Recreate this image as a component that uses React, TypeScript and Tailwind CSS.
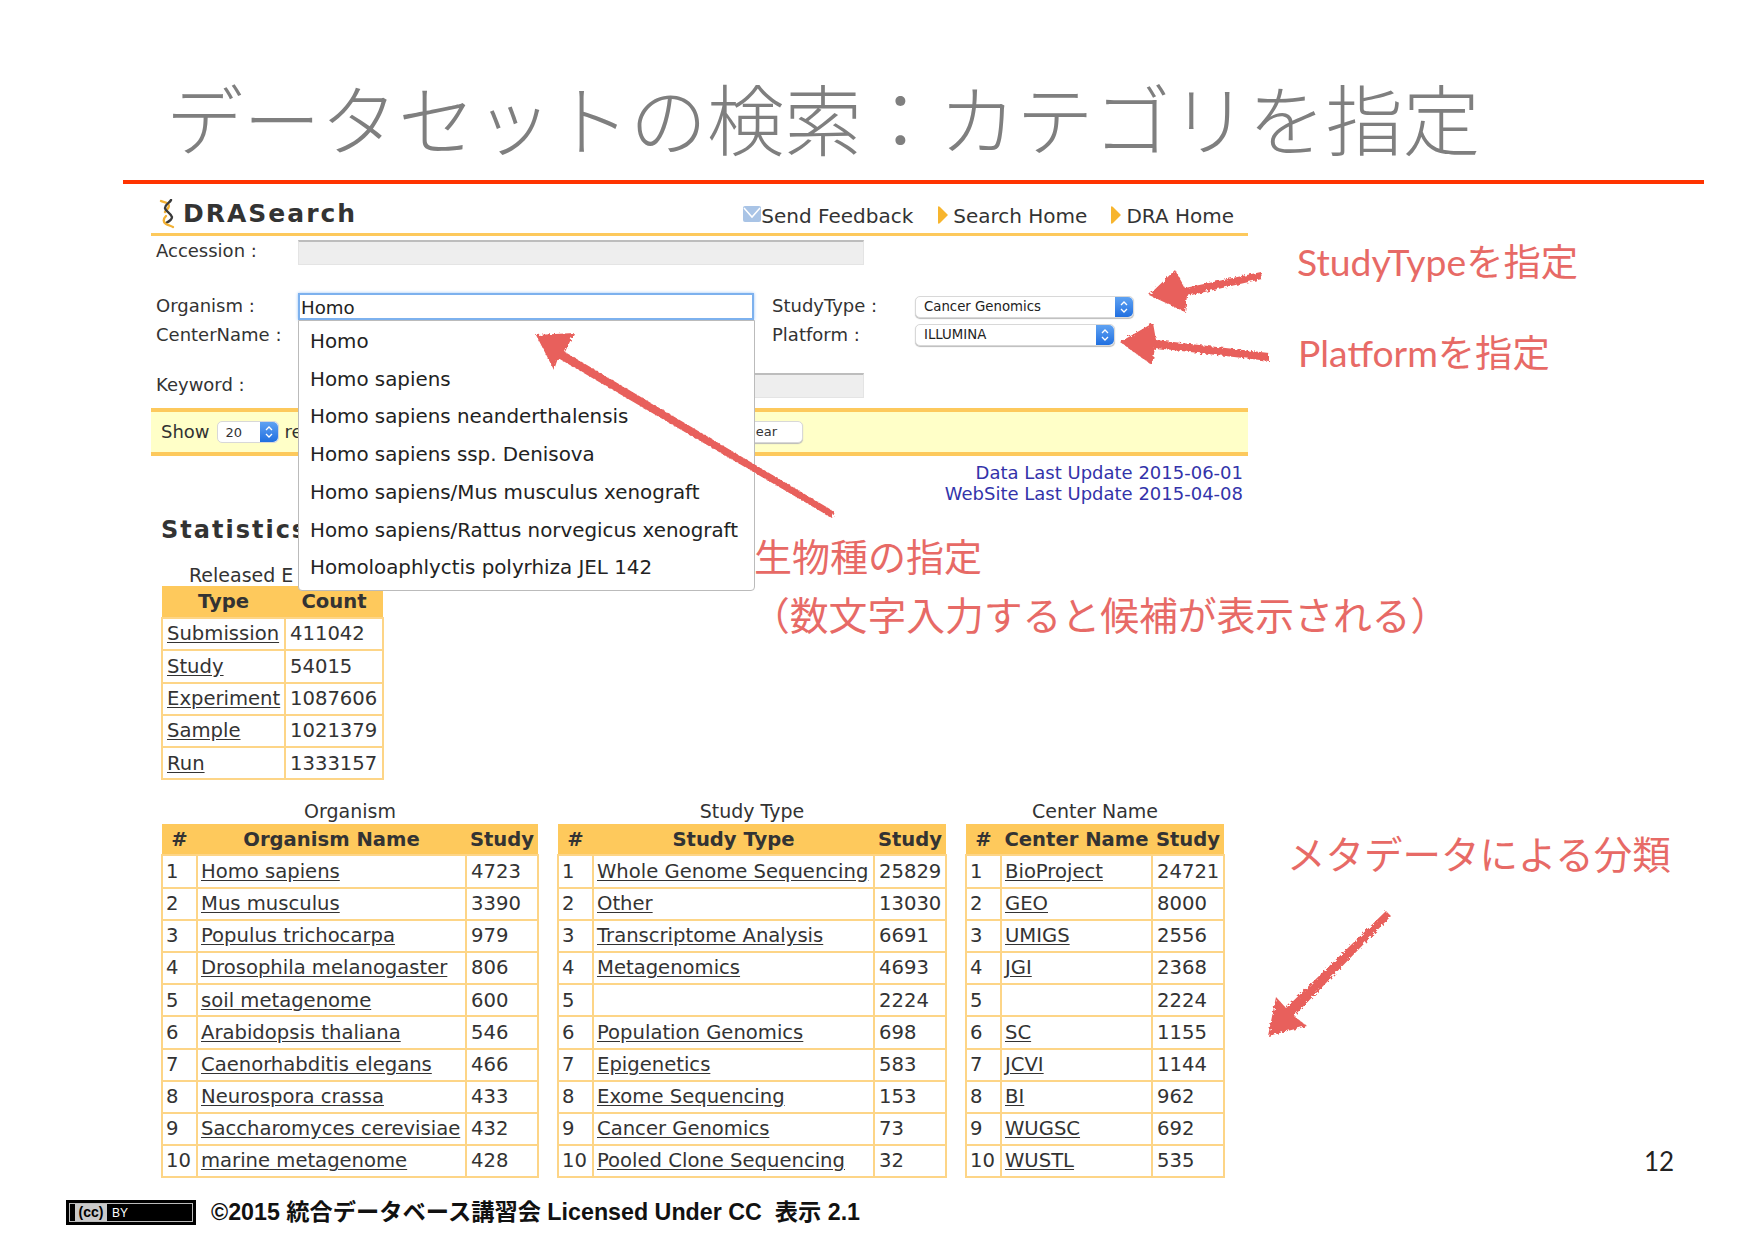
import React from "react";

const web = "font-['DejaVu_Sans','Noto_Sans_CJK_JP',sans-serif]";
const note =
  "absolute font-['Lato','Noto_Sans_CJK_JP',sans-serif] text-[#e76a66] whitespace-nowrap leading-none";

const suggestions = [
  "Homo",
  "Homo sapiens",
  "Homo sapiens neanderthalensis",
  "Homo sapiens ssp. Denisova",
  "Homo sapiens/Mus musculus xenograft",
  "Homo sapiens/Rattus norvegicus xenograft",
  "Homoloaphlyctis polyrhiza JEL 142",
];

const statistics = [
  ["Submission", "411042"],
  ["Study", "54015"],
  ["Experiment", "1087606"],
  ["Sample", "1021379"],
  ["Run", "1333157"],
];

const organisms = [
  ["Homo sapiens", "4723"],
  ["Mus musculus", "3390"],
  ["Populus trichocarpa", "979"],
  ["Drosophila melanogaster", "806"],
  ["soil metagenome", "600"],
  ["Arabidopsis thaliana", "546"],
  ["Caenorhabditis elegans", "466"],
  ["Neurospora crassa", "433"],
  ["Saccharomyces cerevisiae", "432"],
  ["marine metagenome", "428"],
];

const studyTypes = [
  ["Whole Genome Sequencing", "25829"],
  ["Other", "13030"],
  ["Transcriptome Analysis", "6691"],
  ["Metagenomics", "4693"],
  ["", "2224"],
  ["Population Genomics", "698"],
  ["Epigenetics", "583"],
  ["Exome Sequencing", "153"],
  ["Cancer Genomics", "73"],
  ["Pooled Clone Sequencing", "32"],
];

const centers = [
  ["BioProject", "24721"],
  ["GEO", "8000"],
  ["UMIGS", "2556"],
  ["JGI", "2368"],
  ["", "2224"],
  ["SC", "1155"],
  ["JCVI", "1144"],
  ["BI", "962"],
  ["WUGSC", "692"],
  ["WUSTL", "535"],
];

function Stepper() {
  return (
    <span className="w-[18px] self-stretch rounded-r-[5px] bg-gradient-to-b from-[#5fa2f2] to-[#1f6fe0] flex items-center justify-center shrink-0">
      <svg width="8" height="14" viewBox="0 0 8 14" fill="none" stroke="#fff" strokeWidth="1.3">
        <path d="M1 5l3-3 3 3M1 9l3 3 3-3" />
      </svg>
    </span>
  );
}

function Select({ value, width }: { value: string; width: string }) {
  return (
    <div
      className={`${width} h-[22px] flex items-center justify-between bg-white rounded-[5px] border border-[#d8d8d8] shadow-[0_1px_1px_#bbb] text-[13.3px] text-[#222] leading-none`}
    >
      <span className="pl-2">{value}</span>
      <Stepper />
    </div>
  );
}

function GrayInput({ width }: { width: string }) {
  return <div className={`${width} h-[25px] bg-[#eeeeee] border border-[#e4e4e4] border-t-[#bdbdbd] border-t-2`} />;
}

function RankTable({
  title,
  head,
  rows,
  widths,
}: {
  title: string;
  head: string;
  rows: string[][];
  widths: number[];
}) {
  return (
    <div>
      <div className="h-[24px] text-center text-[19px] leading-[22px] text-[#333]">{title}</div>
      <table className="table-fixed border-collapse text-[19.6px] leading-none text-[#333]">
        <colgroup>
          {widths.map((w) => (
            <col key={w} style={{ width: w }} />
          ))}
        </colgroup>
        <thead>
          <tr className="h-[31px] bg-[#fec95c] font-bold">
            <th className="font-bold">#</th>
            <th className="font-bold">{head}</th>
            <th className="font-bold">Study</th>
          </tr>
        </thead>
        <tbody>
          {rows.map((r, i) => (
            <tr key={i} className="h-[32.2px]">
              <td className="border-2 border-[#fdd587] pl-[3px]">{i + 1}</td>
              <td className="border-2 border-[#fdd587] pl-[3px] whitespace-nowrap underline underline-offset-2">{r[0]}</td>
              <td className="border-2 border-[#fdd587] pl-[4px]">{r[1]}</td>
            </tr>
          ))}
        </tbody>
      </table>
    </div>
  );
}

function Logo() {
  return (
    <svg width="20" height="30" viewBox="0 0 20 30" fill="none" strokeWidth="2.4" strokeLinecap="round">
      <path d="M3 2c2 1 5 1 7 3 3 3-1 5-3 8" stroke="#f2b134" />
      <path d="M13 1c-1 3-6 4-6 8 0 3 6 5 7 9 0 3-4 5-6 6" stroke="#3a3a3a" />
      <path d="M8 17c-3 3-3 6 0 8 2 1 5 2 7 3" stroke="#f2b134" />
    </svg>
  );
}

function NavArrow() {
  return (
    <svg width="11" height="18" viewBox="0 0 11 18" className="mb-[5px]">
      <path d="M1 1c0-1 1-1 2 0l7 7c1 1 1 1 0 2l-7 7c-1 1-2 1-2 0z" fill="#f7b52e" />
    </svg>
  );
}

export default function App() {
  return (
    <div className="relative w-[1754px] h-[1240px] overflow-hidden bg-white">
      <h1 className="h-[180px] pt-[78px] pl-[166px] text-[77.3px] leading-none font-light text-[#7f7f7f] whitespace-nowrap font-['Noto_Sans_CJK_JP',sans-serif]">
        データセットの検索：カテゴリを指定
      </h1>
      <div className="ml-[123px] w-[1581px] h-1 bg-[#ff3300]" />

      <div className={`relative ml-[151px] w-[1097px] ${web} text-[#333]`}>
        <header className="h-[52px] flex items-end justify-between border-b-[3px] border-[#fdc95c] pb-[4px] pl-[7px] pr-[14px]">
          <div className="flex items-center gap-[5px]">
            <Logo />
            <span className="text-[25px] leading-none font-bold tracking-[2px] text-[#333] mb-[2px]">DRASearch</span>
          </div>
          <nav className="flex items-end text-[20px] leading-[26px]">
            <svg width="18" height="16" viewBox="0 0 18 16" className="mb-[7px]">
              <rect width="18" height="16" rx="2" fill="#a9c4e6" />
              <path d="M1 2l8 9 8-9" fill="none" stroke="#fff" strokeWidth="1.5" />
            </svg>
            <span>Send Feedback</span>
            <span className="ml-[24px] mr-[5px]"><NavArrow /></span>
            <span>Search Home</span>
            <span className="ml-[23px] mr-[5px]"><NavArrow /></span>
            <span>DRA Home</span>
          </nav>
        </header>

        <div className="pl-[5px] text-[18px]">
          <div className="mt-[4px] flex items-center h-[25px]">
            <span className="w-[142px] -mt-[5px]">Accession :</span>
            <GrayInput width="w-[566px]" />
          </div>
          <div className="mt-[28px] flex items-center h-[27px]">
            <span className="w-[142px] -mt-[2px]">Organism :</span>
            <div className="w-[456px] h-[27px] border-2 border-[#7db1ee] shadow-[0_0_3px_#9cc4f5] pl-[1px] text-[18.2px] leading-[25px] text-[#222]">
              Homo
            </div>
            <span className="ml-[18px] w-[143px] -mt-[2px]">StudyType :</span>
            <Select value="Cancer Genomics" width="w-[219px]" />
          </div>
          <div className="flex items-center h-[30px]">
            <span className="w-[160px] shrink-0 -mt-[1px]">CenterName :</span>
            <span className="ml-[456px] w-[143px] -mt-[1px]">Platform :</span>
            <Select value="ILLUMINA" width="w-[200px]" />
          </div>
          <div className="mt-[23px] flex items-center h-[25px]">
            <span className="w-[142px] -mt-[2px]">Keyword :</span>
            <GrayInput width="w-[566px]" />
          </div>
        </div>

        <div className="mt-[10px] h-[48px] flex items-center justify-between border-y-4 border-[#fdc95c] bg-[#ffffc8] pl-[10px] pr-[445px]">
          <div className="flex items-center text-[18px]">
            <span className="-mt-[2px]">Show</span>
            <div className="ml-[7px] w-[62px] h-[22px] flex items-center justify-between bg-white rounded-[5px] border border-[#d8d8d8] text-[13px] leading-none">
              <span className="pl-2">20</span>
              <Stepper />
            </div>
            <span className="ml-[6px] -mt-[2px]">re</span>
          </div>
          <div className="w-[100px] h-[22px] bg-white rounded-[5px] border border-[#d8d8d8] shadow-[0_1px_1px_#bbb] text-right pr-[25px] text-[13px] leading-[20px]">
            Clear
          </div>
        </div>

        <div className="mt-[6px] pr-[5px] text-right text-[18px] leading-[21px] text-[#3333aa]">
          <div>Data Last Update 2015-06-01</div>
          <div>WebSite Last Update 2015-04-08</div>
        </div>

        <h2 className="mt-[12px] pl-[10px] text-[24px] leading-[28px] font-bold tracking-[2px]">Statistics</h2>
        <div className="mt-[20px] pl-[38px] h-[22px] text-[19px] leading-[22px]">Released E</div>
        <table className="ml-[10px] table-fixed border-collapse text-[19.6px] leading-none">
          <colgroup>
            <col className="w-[123px]" />
            <col className="w-[98px]" />
          </colgroup>
          <thead>
            <tr className="h-[32px] bg-[#fec95c]">
              <th className="font-bold">Type</th>
              <th className="font-bold">Count</th>
            </tr>
          </thead>
          <tbody>
            {statistics.map((r) => (
              <tr key={r[0]} className="h-[32.3px]">
                <td className="border-2 border-[#fdd587] pl-[4px] underline underline-offset-2">{r[0]}</td>
                <td className="border-2 border-[#fdd587] pl-[4px]">{r[1]}</td>
              </tr>
            ))}
          </tbody>
        </table>

        <div className="mt-[20px] pl-[10px] flex gap-[18px]">
          <RankTable title="Organism" head="Organism Name" rows={organisms} widths={[35, 269, 72]} />
          <RankTable title="Study Type" head="Study Type" rows={studyTypes} widths={[35, 281, 72]} />
          <RankTable title="Center Name" head="Center Name" rows={centers} widths={[35, 151, 72]} />
        </div>

        {/* autocomplete list, sits over the form */}
        <ul className="absolute left-[147px] top-[136px] w-[457px] h-[271px] bg-white border border-[#bbb] rounded-b-[4px] pt-[2px] pl-[11px] text-[19.85px] text-[#222] leading-[37.7px] whitespace-nowrap">
          {suggestions.map((s) => (
            <li key={s}>{s}</li>
          ))}
        </ul>
      </div>

      <footer className="ml-[66px] mt-[22px] flex items-center gap-[15px]">
        <div className="w-[130px] h-[25px] bg-black border-2 border-black outline outline-1 -outline-offset-4 outline-[#bbb] flex items-center text-white">
          <span className="ml-[7px] w-[32px] h-[17px] bg-[#c9c9c9] text-black text-[14px] font-bold leading-[17px] text-center font-['Liberation_Sans',sans-serif]">
            (cc)
          </span>
          <span className="ml-[5px] text-[12px] font-['Liberation_Sans',sans-serif]">BY</span>
        </div>
        <div className="text-[23.25px] leading-none font-bold text-[#111] whitespace-nowrap font-['Liberation_Sans','Noto_Sans_CJK_JP',sans-serif]">
          ©2015 統合データベース講習会 Licensed Under CC&nbsp; 表示 2.1
        </div>
      </footer>

      {/* slide annotations drawn on top of the web page capture */}
      <svg className="absolute left-0 top-0 pointer-events-none" width="1754" height="1240" fill="#e8605c">
        <defs>
          <filter id="rough" x="-10%" y="-10%" width="120%" height="120%">
            <feTurbulence type="fractalNoise" baseFrequency="0.35" numOctaves="2" seed="4" />
            <feDisplacementMap in="SourceGraphic" scale="5" />
          </filter>
        </defs>
        <g filter="url(#rough)">
          <polygon points="1149,295 1175,270 1185,288 1261,272 1262,279 1187,296 1185,312" />
          <polygon points="1120,342 1153,323 1156,340 1269,353 1269,361 1155,348 1152,365" />
          <polygon points="536,335 574,333 565,352 835,512 832,518 558,358 554,370" />
          <polygon points="1268,1036 1276,997 1286,1008 1386,911 1391,916 1294,1016 1307,1026" />
        </g>
      </svg>
      <div className={`${note} left-[1297px] top-[243px] text-[37.3px]`}>StudyTypeを指定</div>
      <div className={`${note} left-[1298px] top-[334px] text-[37.3px]`}>Platformを指定</div>
      <div className={`${note} left-[754px] top-[537px] text-[38px]`}>生物種の指定</div>
      <div className={`${note} left-[751px] top-[596px] text-[38.8px]`}>（数文字入力すると候補が表示される）</div>
      <div className={`${note} left-[1287px] top-[835px] text-[38.5px]`}>メタデータによる分類</div>
      <div className="absolute left-[1644px] top-[1148px] text-[26px] leading-none text-[#222] font-['Lato',sans-serif]">12</div>
    </div>
  );
}
